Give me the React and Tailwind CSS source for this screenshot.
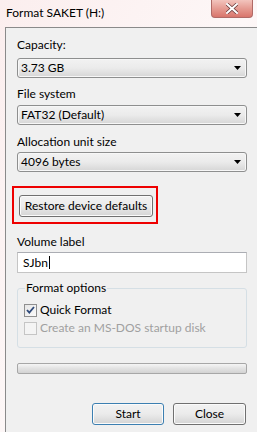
import React from 'react';

function Combo({ value }) {
    return (
        <div className="flex items-center h-[20px] border border-[#8e8f8f] rounded-[3px] bg-gradient-to-b from-[#f2f2f2] via-[#ebebeb] to-[#d6d6d6] pl-[3px] pr-[5px] shadow-[inset_0_0_0_1px_#f7f7f7]">
            <span className="flex-1 leading-none">{value}</span>
            <svg width="7" height="4" viewBox="0 0 7 4"><path d="M0 0h7L3.5 4z" fill="#000" /></svg>
        </div>
    );
}

function Button({ children, className = '', focused = false }) {
    return (
        <div className={`flex items-center justify-center h-[22px] rounded-[3px] border ${focused ? 'border-[#3c7fb1]' : 'border-[#707070]'} bg-gradient-to-b from-[#f2f2f2] via-[#ebebeb] to-[#d4d4d4] shadow-[inset_0_0_0_1px_#fbfbfb] ${className}`}>
            {children}
        </div>
    );
}

export default function App() {
    return (
        <div className="w-[257px] h-[432px] overflow-hidden bg-gradient-to-br from-[#fbeeee] via-[#fdf7f7] to-[#f6e4e4] text-[12px] text-black flex flex-col" style={{ fontFamily: 'Lato, "Noto Sans", sans-serif' }}>
            {/* title bar */}
            <div className="h-[27px] flex items-start pl-[6px] relative">
                <span className="mt-[6px] text-[12px] leading-[14px]">Format SAKET (H:)</span>
                <div className="absolute right-[4px] top-0 w-[42px] h-[18px] rounded-b-[4px] border border-t-0 border-[#b06a66] bg-gradient-to-b from-[#f2c4bd] via-[#e59b92] to-[#d9756c] flex items-center justify-center">
                    <svg width="12" height="11" viewBox="0 0 12 11">
                        <path d="M1 1L11 10M11 1L1 10" stroke="#6a3a3a" strokeWidth="3.4" strokeLinecap="square" />
                        <path d="M1 1L11 10M11 1L1 10" stroke="#fff" strokeWidth="2" strokeLinecap="square" />
                    </svg>
                </div>
            </div>

            {/* client area */}
            <div className="flex-1 ml-[5px] border-l border-t border-[#8a8a8a] bg-[#f0f0f0] pl-[11px] pr-[10px] pt-[9px]">
                <div className="leading-[15px]">Capacity:</div>
                <div className="mt-[6px]"><Combo value="3.73 GB" /></div>

                <div className="mt-[8px] leading-[15px]">File system</div>
                <div className="mt-[4px]"><Combo value="FAT32 (Default)" /></div>

                <div className="mt-[9px] leading-[15px]">Allocation unit size</div>
                <div className="mt-[3px]"><Combo value="4096 bytes" /></div>

                <div className="mt-[14px] -ml-[5px] w-[146px] h-[38px] border-2 border-[#ee0000] pl-[5px] pt-[7px]">
                    <Button className="w-[134px]">Restore device defaults</Button>
                </div>

                <div className="mt-[10px] leading-[15px]">Volume label</div>
                <div className="mt-[3px] h-[21px] bg-white border border-[#c5c5c5] border-t-[#abadb3] flex items-center pl-[5px]">
                    <span>SJbn</span>
                    <span className="w-px h-[13px] bg-black ml-[1px]" />
                </div>

                <div className="mt-[15px] relative border border-[#d5dfe5] rounded-[3px] h-[60px] pl-[6px] pt-[14px]">
                    <span className="absolute left-[7px] -top-[9px] px-[1px] bg-[#f0f0f0] leading-[15px]">Format options</span>
                    <div className="flex items-center gap-[3px] h-[14px]">
                        <div className="w-[13px] h-[13px] border border-[#8f8f8f] bg-gradient-to-br from-[#e6e6e6] to-[#fafafa] flex items-center justify-center">
                            <svg width="9" height="8" viewBox="0 0 9 8"><path d="M1 4l2.3 2.6L8 1" stroke="#2f4a7a" strokeWidth="1.8" fill="none" /></svg>
                        </div>
                        <span className="leading-[14px]">Quick Format</span>
                    </div>
                    <div className="flex items-center gap-[3px] h-[14px] mt-[4px] text-[#a0a0a0]">
                        <div className="w-[13px] h-[13px] border border-[#c5c5c5] bg-[#f4f4f4]" />
                        <span className="leading-[14px]">Create an MS-DOS startup disk</span>
                    </div>
                </div>

                <div className="mt-[15px] h-[11px] rounded-[2px] border border-[#a7a7a7] bg-gradient-to-b from-[#f5f5f5] via-[#e2e2e2] to-[#d3d3d3]" />

                <div className="mt-[29px] flex justify-end gap-[9px] pr-[1px]">
                    <Button focused className="w-[72px]">Start</Button>
                    <Button className="w-[73px]">Close</Button>
                </div>
            </div>
        </div>
    );
}
